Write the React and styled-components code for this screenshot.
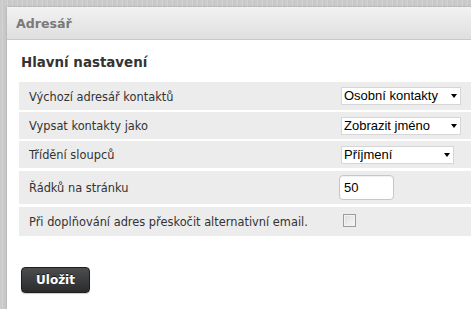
import React from "react";
import styled, { createGlobalStyle } from "styled-components";

const Global = createGlobalStyle`
  html, body { margin: 0; padding: 0; }
  body {
    width: 471px;
    height: 309px;
    overflow: hidden;
    background-color: #cdcdcd;
    background-image: repeating-linear-gradient(90deg, #cbcbcb 0px, #cbcbcb 2px, #d3d3d3 2px, #d3d3d3 3px, #c8c8c8 3px, #c8c8c8 5px);
    font-family: "DejaVu Sans", Verdana, sans-serif;
  }
`;

const Page = styled.div`
  padding: 7px 0 0 7px;
  height: 302px;
`;

const Panel = styled.section`
  background: #fff;
  height: 100%;
  box-shadow: 0 0 2px rgba(0, 0, 0, 0.25);
  display: flex;
  flex-direction: column;
`;

const Header = styled.header`
  height: 33px;
  box-sizing: border-box;
  border-bottom: 1px solid #c8c8c8;
  background: linear-gradient(#f2f2f2, #dfdfdf);
  display: flex;
  align-items: center;
  padding-left: 9px;
  font-weight: bold;
  font-size: 12.6px;
  color: #7a7a7a;
`;

const Content = styled.div`
  padding: 13px 0 0 12px;
  display: flex;
  flex-direction: column;
`;

const Title = styled.h2`
  margin: 0 0 9px 2px;
  font-size: 13.4px;
  line-height: 20px;
  font-weight: bold;
  color: #333;
`;

const Rows = styled.div`
  display: flex;
  flex-direction: column;
  gap: 2px;
`;

const Row = styled.div`
  display: grid;
  grid-template-columns: 321px 1fr;
  align-items: center;
  height: ${(p) => p.$h}px;
  margin-top: ${(p) => p.$mt || 0}px;
  background: #ececec;
`;

const Label = styled.label`
  padding: 1px 0 0 10px;
  font-size: 11.4px;
  color: #333;
`;

const SelectBox = styled.div`
  position: relative;
  width: ${(p) => p.$w}px;
  height: 18px;
  box-sizing: border-box;
  margin-left: 1px;
  border: 1px solid #d6d6d6;
  background: #fff;
  font-family: "Liberation Sans", Arial, sans-serif;
  font-size: 13px;
  line-height: 16px;
  color: #000;
  padding-left: 2px;
`;

const Arrow = styled.span`
  position: absolute;
  right: 3px;
  top: 6px;
  width: 0;
  height: 0;
  border-left: 3.5px solid transparent;
  border-right: 3.5px solid transparent;
  border-top: 4px solid #000;
`;

const TextInput = styled.input`
  width: 55px;
  height: 25px;
  box-sizing: border-box;
  margin: 0 0 0 -1px;
  border: 1px solid #c6c6c6;
  border-radius: 4px;
  padding: 0 4px;
  font-family: "Liberation Sans", Arial, sans-serif;
  font-size: 13px;
  color: #000;
  box-shadow: inset 0 1px 1px rgba(0, 0, 0, 0.06);
  outline: none;
`;

const Check = styled.input`
  appearance: none;
  width: 13px;
  height: 13px;
  box-sizing: border-box;
  margin: 0 0 0 3px;
  border: 1px solid #9c9c9c;
  background: linear-gradient(135deg, #dcdcdc, #f8f8f8);
  box-shadow: inset 0 0 0 1px #f2f2f2;
`;

const Button = styled.button`
  margin: 31px 0 0 2px;
  align-self: flex-start;
  width: 69px;
  height: 26px;
  border: 1px solid #1e1e1e;
  border-radius: 4px;
  background: linear-gradient(#4b4d4e, #2a2b2c);
  color: #fff;
  font-family: "DejaVu Sans", Verdana, sans-serif;
  font-weight: bold;
  font-size: 12px;
  padding: 0;
  text-shadow: 0 -1px 0 rgba(0, 0, 0, 0.6);
  box-shadow: 0 1px 1px rgba(0, 0, 0, 0.2);
`;

function Select({ value, width }) {
  return (
    <SelectBox $w={width}>
      {value}
      <Arrow />
    </SelectBox>
  );
}

export default function App() {
  return (
    <>
      <Global />
      <Page>
        <Panel>
          <Header>Adresář</Header>
          <Content>
            <Title>Hlavní nastavení</Title>
            <Rows>
              <Row $h={28}>
                <Label>Výchozí adresář kontaktů</Label>
                <Select value="Osobní kontakty" width={120} />
              </Row>
              <Row $h={27}>
                <Label>Vypsat kontakty jako</Label>
                <Select value="Zobrazit jméno" width={120} />
              </Row>
              <Row $h={27}>
                <Label>Třídění sloupců</Label>
                <Select value="Příjmení" width={113} />
              </Row>
              <Row $h={33} $mt={1}>
                <Label>Řádků na stránku</Label>
                <div>
                  <TextInput defaultValue="50" />
                </div>
              </Row>
              <Row $h={29} $mt={1}>
                <Label>Při doplňování adres přeskočit alternativní email.</Label>
                <div>
                  <Check type="checkbox" />
                </div>
              </Row>
            </Rows>
            <Button>Uložit</Button>
          </Content>
        </Panel>
      </Page>
    </>
  );
}
